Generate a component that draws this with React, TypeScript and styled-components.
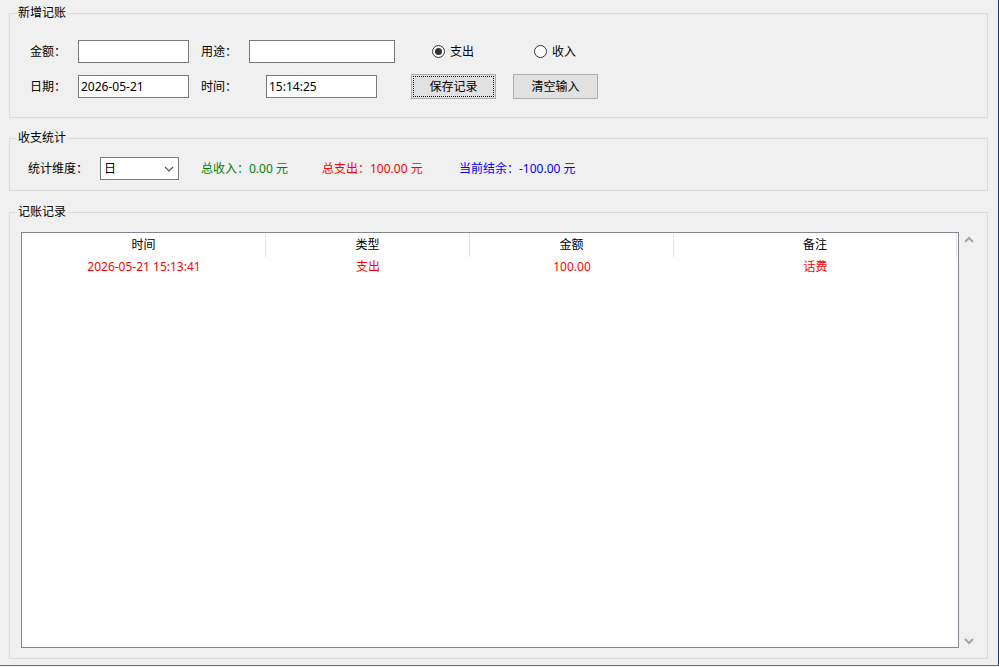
import React from "react";
import styled, { createGlobalStyle } from "styled-components";

const Global = createGlobalStyle`
  html, body { margin: 0; padding: 0; background: #f0f0f0; }
  body { font-family: "Noto Sans", "Noto Sans CJK SC", sans-serif; font-size: 12px; color: #000; }
  * { box-sizing: border-box; }
`;

const Window = styled.div`
  width: 999px;
  height: 666px;
  background: #f0f0f0;
  border-right: 1px solid #1e3a6e;
  border-bottom: 1px solid #707070;
  padding: 13px 11px 0 9px;
  display: flex;
  flex-direction: column;
`;

const Group = styled.div<{ $h: number; $mt?: number }>`
  position: relative;
  width: 979px;
  height: ${(p) => p.$h}px;
  margin-top: ${(p) => p.$mt ?? 0}px;
  border: 1px solid #dcdcdc;
  flex-shrink: 0;
`;

const GroupTitle = styled.span`
  position: absolute;
  left: 7px;
  top: -9px;
  line-height: 16px;
  padding: 0 1px;
  background: #f0f0f0;
  color: #000;
`;

const FormBody = styled.div`
  padding: 26px 0 0 20px;
  display: flex;
  flex-direction: column;
  gap: 11px;
`;

const Row = styled.div<{ $h: number }>`
  display: flex;
  align-items: center;
  height: ${(p) => p.$h}px;
`;

const Label = styled.span<{ $w: number; $ml?: number }>`
  width: ${(p) => p.$w}px;
  margin-left: ${(p) => p.$ml ?? 0}px;
  line-height: 16px;
  flex-shrink: 0;
`;

const Input = styled.div<{ $w: number }>`
  width: ${(p) => p.$w}px;
  height: 23px;
  border: 1px solid #7a7a7a;
  background: #fff;
  padding-left: 2px;
  display: flex;
  align-items: center;
  line-height: 16px;
  flex-shrink: 0;
`;

const Radio = styled.div<{ $w: number; $ml?: number }>`
  width: ${(p) => p.$w}px;
  margin-left: ${(p) => p.$ml ?? 0}px;
  display: flex;
  align-items: center;
  gap: 5px;
  line-height: 16px;
  flex-shrink: 0;
`;

const Circle = styled.span<{ $on?: boolean }>`
  width: 13px;
  height: 13px;
  border-radius: 50%;
  border: 1px solid #333;
  background: #fff;
  display: flex;
  align-items: center;
  justify-content: center;
  &::after {
    content: "";
    display: ${(p) => (p.$on ? "block" : "none")};
    width: 7px;
    height: 7px;
    border-radius: 50%;
    background: #333;
  }
`;

const Button = styled.div<{ $ml: number; $focus?: boolean }>`
  margin-left: ${(p) => p.$ml}px;
  width: 85px;
  height: 25px;
  background: #e1e1e1;
  border: 1px solid #adadad;
  display: flex;
  align-items: center;
  justify-content: center;
  position: relative;
  line-height: 16px;
  flex-shrink: 0;
  ${(p) =>
    p.$focus
      ? `&::before { content: ""; position: absolute; inset: 1px; border: 1px dotted #000; }`
      : ""}
`;

const StatBody = styled.div`
  padding: 18px 0 0 18px;
`;

const Combo = styled.div`
  width: 79px;
  height: 23px;
  border: 1px solid #7a7a7a;
  background: #fff;
  display: flex;
  align-items: center;
  justify-content: space-between;
  padding: 0 4px 0 3px;
  line-height: 16px;
  flex-shrink: 0;
`;

const Stat = styled.span<{ $c: string; $w?: number; $ml?: number }>`
  color: ${(p) => p.$c};
  width: ${(p) => (p.$w ? `${p.$w}px` : "auto")};
  margin-left: ${(p) => p.$ml ?? 0}px;
  line-height: 16px;
  flex-shrink: 0;
  white-space: nowrap;
`;

const ListBody = styled.div`
  padding: 19px 0 0 11px;
  display: flex;
`;

const Table = styled.div`
  width: 938px;
  height: 416px;
  border: 1px solid #828790;
  background: #fff;
  flex-shrink: 0;
`;

const Grid = styled.div`
  display: grid;
  grid-template-columns: 244px 204px 204px 283px;
`;

const HeadCell = styled.div`
  height: 24px;
  border-right: 1px solid #e5e5e5;
  display: flex;
  align-items: center;
  justify-content: center;
  line-height: 16px;
`;

const Cell = styled.div`
  height: 20px;
  color: #ff0000;
  display: flex;
  align-items: center;
  justify-content: center;
  line-height: 16px;
`;

const ScrollBar = styled.div`
  width: 17px;
  height: 416px;
  display: flex;
  flex-direction: column;
  justify-content: space-between;
  align-items: center;
  padding: 4px 0 3px 0;
  margin-left: 1px;
`;

const Chevron = ({ up }: { up?: boolean }) => (
  <svg width="10" height="7" viewBox="0 0 10 7">
    <path
      d={up ? "M1 6 L5 2 L9 6" : "M1 1 L5 5 L9 1"}
      fill="none"
      stroke="#a6a6a6"
      strokeWidth="2"
    />
  </svg>
);

const SmallChevron = () => (
  <svg width="10" height="6" viewBox="0 0 10 6">
    <path d="M1 1 L5 5 L9 1" fill="none" stroke="#555" strokeWidth="1.1" />
  </svg>
);

export default function App() {
  return (
    <>
      <Global />
      <Window>
        <Group $h={105}>
          <GroupTitle>新增记账</GroupTitle>
          <FormBody>
            <Row $h={23}>
              <Label $w={48}>金额：</Label>
              <Input $w={111} />
              <Label $w={48} $ml={12}>用途：</Label>
              <Input $w={146} />
              <Radio $w={102} $ml={37}>
                <Circle $on />
                支出
              </Radio>
              <Radio $w={80}>
                <Circle />
                收入
              </Radio>
            </Row>
            <Row $h={25}>
              <Label $w={48}>日期：</Label>
              <Input $w={111}>2026-05-21</Input>
              <Label $w={65} $ml={12}>时间：</Label>
              <Input $w={111}>15:14:25</Input>
              <Button $ml={34} $focus>保存记录</Button>
              <Button $ml={17}>清空输入</Button>
            </Row>
          </FormBody>
        </Group>

        <Group $h={53} $mt={20}>
          <GroupTitle>收支统计</GroupTitle>
          <StatBody>
            <Row $h={23}>
              <Label $w={72}>统计维度：</Label>
              <Combo>
                <span>日</span>
                <SmallChevron />
              </Combo>
              <Stat $c="#008000" $w={121} $ml={22}>总收入：0.00 元</Stat>
              <Stat $c="#ff0000" $w={137}>总支出：100.00 元</Stat>
              <Stat $c="#0000ff">当前结余：-100.00 元</Stat>
            </Row>
          </StatBody>
        </Group>

        <Group $h={447} $mt={21}>
          <GroupTitle>记账记录</GroupTitle>
          <ListBody>
            <Table>
              <Grid>
                <HeadCell>时间</HeadCell>
                <HeadCell>类型</HeadCell>
                <HeadCell>金额</HeadCell>
                <HeadCell>备注</HeadCell>
                <Cell>2026-05-21 15:13:41</Cell>
                <Cell>支出</Cell>
                <Cell>100.00</Cell>
                <Cell>话费</Cell>
              </Grid>
            </Table>
            <ScrollBar>
              <Chevron up />
              <Chevron />
            </ScrollBar>
          </ListBody>
        </Group>
      </Window>
    </>
  );
}
